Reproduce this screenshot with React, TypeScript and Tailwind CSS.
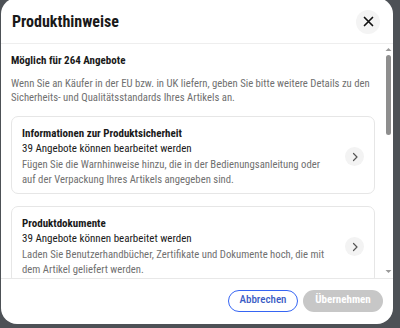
import React from "react";

function Chevron() {
  return (
    <div className="w-[19px] h-[19px] rounded-full bg-[#f3f3f3] flex items-center justify-center shrink-0">
      <svg width="8" height="10" viewBox="0 0 8 10" fill="none">
        <path d="M2.5 1.5 L6 5 L2.5 8.5" stroke="#555" strokeWidth="1.2" strokeLinecap="round" strokeLinejoin="round" />
      </svg>
    </div>
  );
}

function Card({ title, desc }: { title: string; desc: string[] }) {
  return (
    <div className="border border-[#e6e6e6] rounded-[7px] pl-[10px] pr-[10px] pt-[9px] pb-[6px] flex items-center whitespace-nowrap">
      <div className="flex-1">
        <div className="text-[11px] leading-[15px] font-bold text-[#191919]">{title}</div>
        <p className="text-[11px] leading-[15px] text-[#191919]">39 Angebote können bearbeitet werden</p>
        <div className="text-[10.7px] leading-[15px] text-[#707070] mt-[1px]">
          {desc.map((d, i) => (
            <div key={i}>{d}</div>
          ))}
        </div>
      </div>
      <Chevron />
    </div>
  );
}

export default function App() {
  return (
    <div className="w-[400px] h-[328px] bg-[#4d5156] overflow-hidden font-['Roboto_Condensed','Roboto',sans-serif]">
      <div className="ml-[1px] mt-[-2px] w-[392px] h-[326px] bg-white rounded-[16px] flex flex-col overflow-hidden">
        <div className="h-[46px] shrink-0 border-b border-[#eeeeee] flex items-center justify-between pl-[11px] pr-[7px] pt-[2px]">
          <div className="text-[16px] font-bold text-[#191919]">Produkthinweise</div>
          <div className="w-[24px] h-[24px] rounded-full bg-[#f4f4f4] flex items-center justify-center mr-[6px]">
            <svg width="11" height="11" viewBox="0 0 11 11">
              <path d="M1.5 1.5 L9.5 9.5 M9.5 1.5 L1.5 9.5" stroke="#111" strokeWidth="1.7" strokeLinecap="round" />
            </svg>
          </div>
        </div>
        <div className="relative h-[234px] shrink-0 overflow-hidden">
          <div className="pl-[10px] pr-[18px] pt-[9px] whitespace-nowrap">
            <div className="text-[11px] leading-[15px] font-bold text-[#191919]">Möglich für 264 Angebote</div>
            <div className="text-[10.7px] leading-[14px] text-[#707070] mt-[9px]">
              <div>Wenn Sie an Käufer in der EU bzw. in UK liefern, geben Sie bitte weitere Details zu den</div>
              <div>Sicherheits- und Qualitätsstandards Ihres Artikels an.</div>
            </div>
            <div className="mt-[11px] flex flex-col gap-[12px]">
              <Card
                title="Informationen zur Produktsicherheit"
                desc={[
                  "Fügen Sie die Warnhinweise hinzu, die in der Bedienungsanleitung oder",
                  "auf der Verpackung Ihres Artikels angegeben sind.",
                ]}
              />
              <Card
                title="Produktdokumente"
                desc={[
                  "Laden Sie Benutzerhandbücher, Zertifikate und Dokumente hoch, die mit",
                  "dem Artikel geliefert werden.",
                ]}
              />
            </div>
          </div>
          <div className="absolute right-[1px] top-0 bottom-0 w-[7px] flex flex-col items-center">
            <svg width="7" height="5" viewBox="0 0 7 5" className="mt-[3px]">
              <path d="M0.5 4 L3.5 1 L6.5 4 Z" fill="#9a9a9a" />
            </svg>
            <div className="w-[5px] h-[80px] rounded-full bg-[#8e8e8e] mt-[3px]" />
            <div className="flex-1" />
            <svg width="7" height="5" viewBox="0 0 7 5" className="mb-[4px]">
              <path d="M0.5 1 L3.5 4 L6.5 1 Z" fill="#9a9a9a" />
            </svg>
          </div>
        </div>
        <div className="flex-1 border-t border-[#e8e8e8] flex items-center justify-end gap-[5px] pr-[10px] pb-[2px]">
          <button className="h-[22px] w-[70px] rounded-full border border-[#3665f3] text-[#3a5cc5] text-[11px] font-medium bg-white">Abbrechen</button>
          <button className="h-[22px] w-[80px] rounded-full bg-[#c7c7c7] text-white text-[11px] font-bold">Übernehmen</button>
        </div>
      </div>
    </div>
  );
}
